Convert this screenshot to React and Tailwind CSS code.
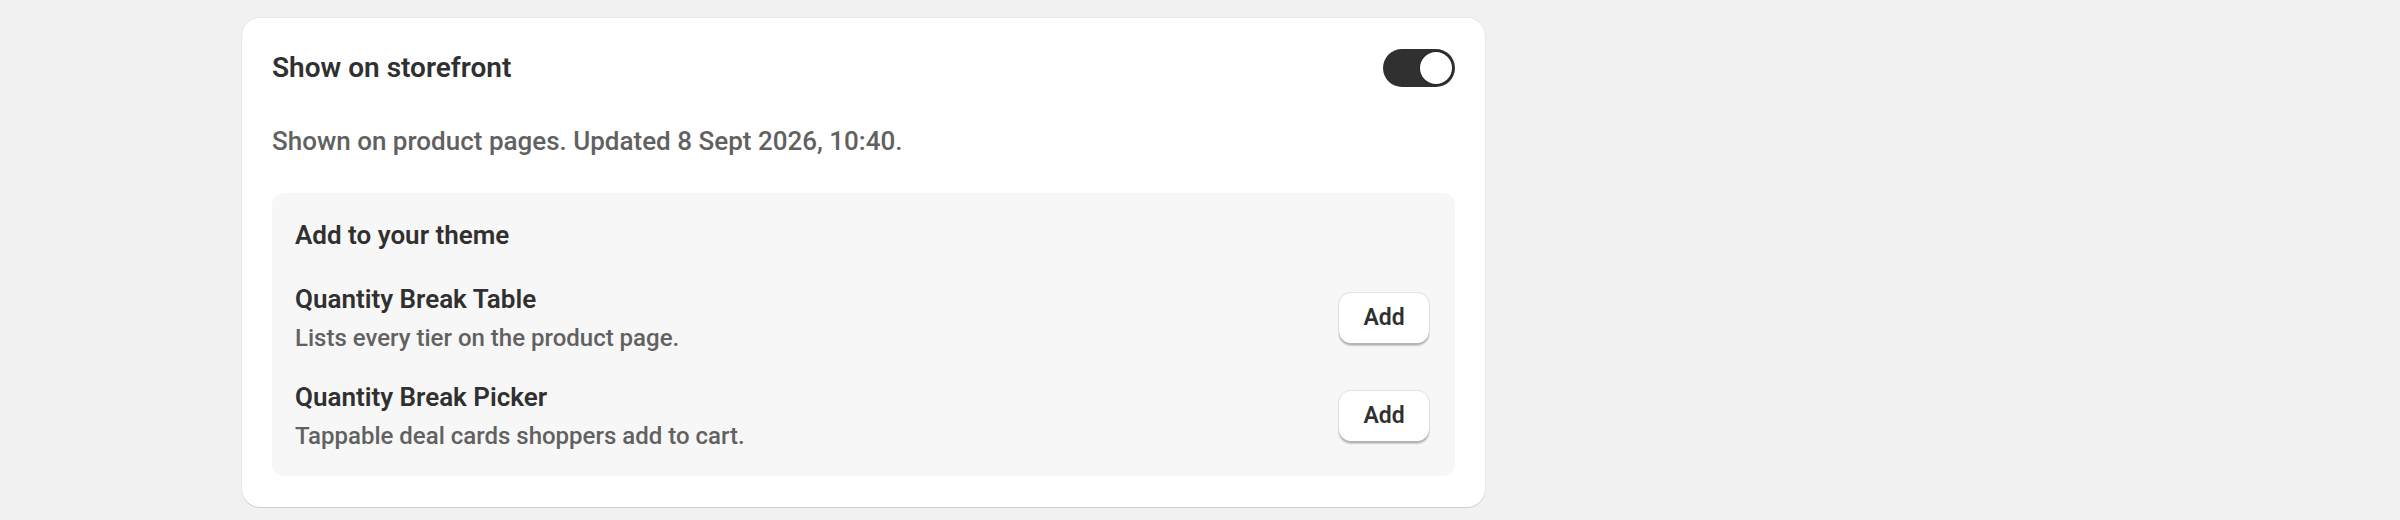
import React, { useState } from 'react';

const blocks = [
  { name: 'Quantity Break Table', text: 'Lists every tier on the product page.' },
  { name: 'Quantity Break Picker', text: 'Tappable deal cards shoppers add to cart.' },
];

export default function App() {
  const [enabled, setEnabled] = useState(true);

  return (
    <div className="min-h-screen bg-[#f1f1f1] pt-[18px] pl-[242px] font-['Roboto','Liberation_Sans',sans-serif] text-[#303030]">
      <div className="w-[1243px] rounded-[18px] bg-white px-[30px] pt-[31px] pb-[31px] shadow-[0_1px_0_0_rgba(26,26,26,0.12),0_0_0_1px_rgba(26,26,26,0.04)]">
        {/* Header */}
        <div className="flex h-[38px] items-center justify-between">
          <h2 className="text-[28px] font-semibold leading-[38px]">Show on storefront</h2>
          <button
            onClick={() => setEnabled(!enabled)}
            className={`flex h-[38px] w-[72px] items-center rounded-full p-[3px] ${enabled ? 'justify-end bg-[#303030]' : 'justify-start bg-[#b5b5b5]'}`}
          >
            <span className="block h-[32px] w-[32px] rounded-full bg-white shadow-[0_0_0_1px_rgba(0,0,0,0.2)]" />
          </button>
        </div>

        <p className="mt-[36px] text-[26px] font-medium leading-[36px] text-[#616161]">
          Shown on product pages. Updated 8 Sept 2026, 10:40.
        </p>

        {/* Theme blocks */}
        <div className="mt-[34px] rounded-[12px] bg-[#f7f7f7] px-[23px] pt-[24px] pb-[22px]">
          <h3 className="text-[26px] font-semibold leading-[36px]">Add to your theme</h3>
          <div className="mt-[28px] flex flex-col gap-[23px]">
            {blocks.map((b) => (
              <div key={b.name} className="flex items-center justify-between">
                <div className="flex flex-col gap-[3px]">
                  <span className="text-[26px] font-semibold leading-[36px]">{b.name}</span>
                  <span className="text-[24px] font-medium leading-[36px] text-[#616161]">{b.text}</span>
                </div>
                <button className="mr-[3px] h-[52px] w-[90px] rounded-[12px] bg-white text-[23px] font-semibold shadow-[inset_0_-2px_0_0_#b5b5b5,0_0_0_1px_rgba(0,0,0,0.08),0_1px_2px_rgba(0,0,0,0.1)]">
                  Add
                </button>
              </div>
            ))}
          </div>
        </div>
      </div>
    </div>
  );
}
